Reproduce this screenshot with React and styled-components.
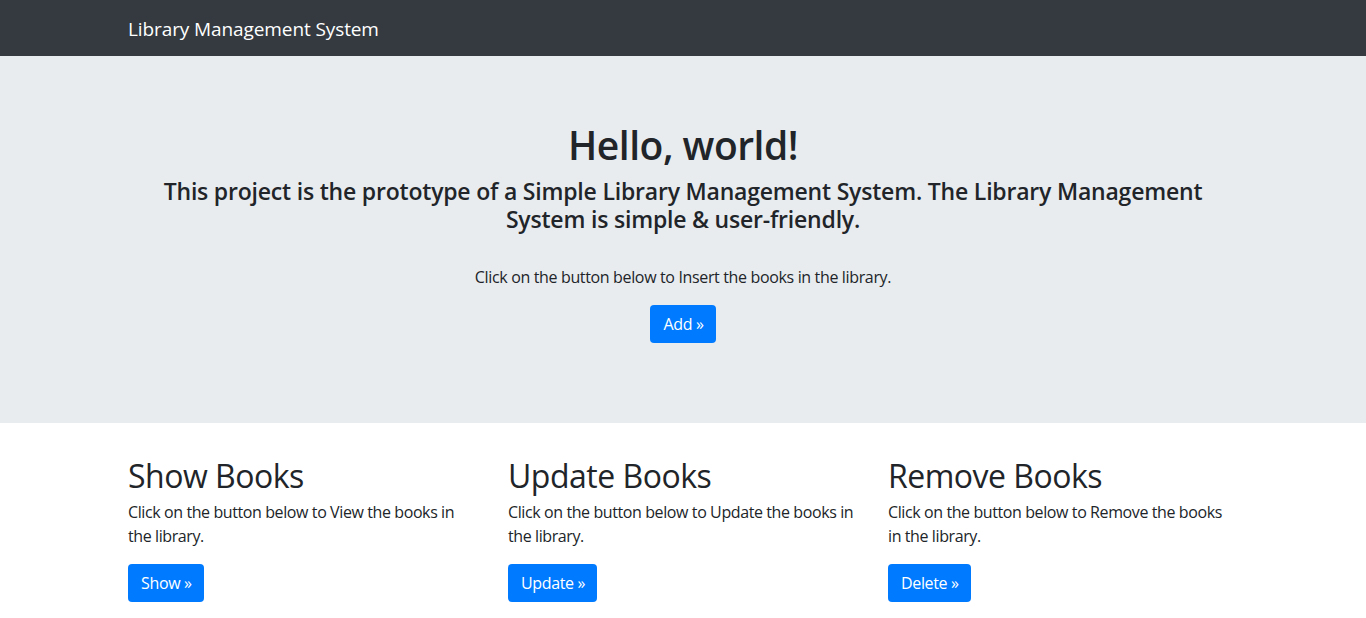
import React from "react";
import styled, { createGlobalStyle } from "styled-components";

const Global = createGlobalStyle`
  * { box-sizing: border-box; }
  body {
    margin: 0;
    font-family: "Open Sans", "Noto Sans", sans-serif;
    font-size: 16px;
    line-height: 1.5;
    color: #212529;
    background: #fff;
  }
  h1, h2, h4, p { margin-top: 0; }
`;

const Navbar = styled.nav`
  background: #343a40;
  height: 56px;
  display: flex;
  align-items: center;
`;

const Container = styled.div`
  width: 1140px;
  margin: 0 auto;
  padding: 0 15px;
`;

const Brand = styled.a`
  display: inline-block;
  color: #fff;
  font-size: 19px;
  line-height: 30px;
  padding-top: 2px;
  letter-spacing: -0.1px;
  text-decoration: none;
`;

const Jumbotron = styled.section`
  background: #e9ecef;
  padding: 66px 32px 64px;
  margin-bottom: 34px;
  text-align: center;
`;

const Title = styled.h1`
  font-size: 39px;
  font-weight: 600;
  line-height: 1.2;
  letter-spacing: -0.5px;
  margin-bottom: 8px;
`;

const Lead = styled.h4`
  font-size: 23px;
  font-weight: 600;
  line-height: 28px;
  letter-spacing: -0.2px;
  margin: 0 auto 32px;
`;

const Text = styled.p`
  font-size: 16px;
  line-height: 24px;
  letter-spacing: -0.35px;
  margin-bottom: 16px;
`;

const ButtonWrap = styled.p`
  margin-bottom: 16px;
`;

const Button = styled.a`
  display: inline-block;
  background: #007bff;
  color: #fff;
  border-radius: 4px;
  padding: 7px 12px 7px 13px;
  font-size: 16px;
  line-height: 24px;
  letter-spacing: -0.35px;
  text-decoration: none;
`;

const Row = styled.div`
  display: grid;
  grid-template-columns: repeat(3, 1fr);
  margin: 0 -15px;
`;

const Col = styled.div`
  padding: 0 15px;
`;

const Heading = styled.h2`
  font-size: 32px;
  font-weight: 500;
  line-height: 38.4px;
  letter-spacing: -0.5px;
  margin-bottom: 5px;
`;

const ColText = styled.p`
  font-size: 16px;
  line-height: 24px;
  letter-spacing: -0.4px;
  margin-bottom: 16px;
`;

const cards = [
  { title: "Show Books", text: "Click on the button below to View the books in the library.", btn: "Show" },
  { title: "Update Books", text: "Click on the button below to Update the books in the library.", btn: "Update" },
  { title: "Remove Books", text: "Click on the button below to Remove the books in the library.", btn: "Delete" },
];

export default function App() {
  return (
    <>
      <Global />
      <Navbar>
        <Container>
          <Brand href="#">Library Management System</Brand>
        </Container>
      </Navbar>
      <Jumbotron>
        <Container>
          <Title>Hello, world!</Title>
          <Lead>
            This project is the prototype of a Simple Library Management System. The Library Management System is simple &amp; user-friendly.
          </Lead>
          <Text>Click on the button below to Insert the books in the library.</Text>
          <ButtonWrap>
            <Button href="#">Add »</Button>
          </ButtonWrap>
        </Container>
      </Jumbotron>
      <Container>
        <Row>
          {cards.map((c) => (
            <Col key={c.title}>
              <Heading>{c.title}</Heading>
              <ColText>{c.text}</ColText>
              <p>
                <Button href="#">{c.btn} »</Button>
              </p>
            </Col>
          ))}
        </Row>
      </Container>
    </>
  );
}
